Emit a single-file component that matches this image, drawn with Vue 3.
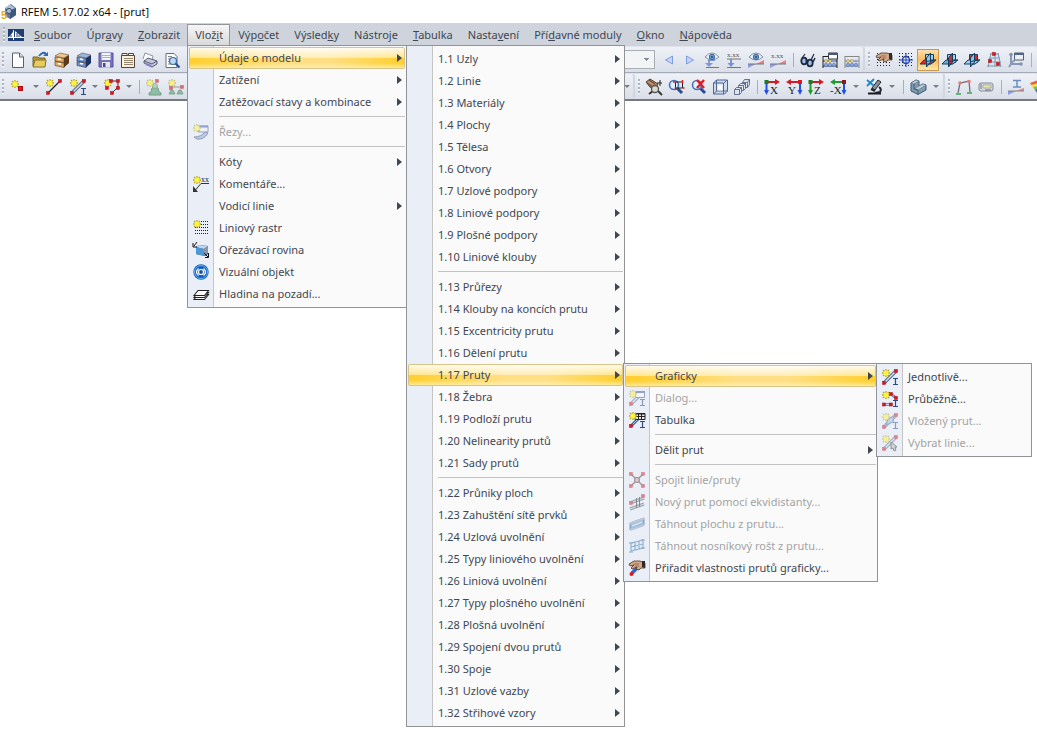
<script setup>
const star = (x, y) =>
  `<path d="M${x} ${y - 4}v8M${x - 4} ${y}h8M${x - 3} ${y - 3}l6 6M${x + 3} ${y - 3}l-6 6" stroke="#b5a51c" stroke-width="1.300"/><circle cx="${x}" cy="${y}" r="2.600" fill="#fff23a"/>`
const dot = (x, y) => `<rect x="${x - 1.5}" y="${y - 1.5}" width="3" height="3" fill="#e01420" stroke="#a80d16" stroke-width=".5"/>`
const beam = (x, y) => `<path d="M${x} ${y + 0.5}h5M${x} ${y + 6.5}h5M${x + 2.5} ${y + 0.5}v6" stroke="#2c4a86" stroke-width="1.2" fill="none"/>`
const rod = '<path d="M2 14L14 2" stroke="#5e6c80" stroke-width="3.500"/><path d="M2 14L14 2" stroke="#c4dcf5" stroke-width="1.500"/>'
const cabinet = (front, top, side) =>
  `<path d="M10 6l5-3v8l-5 4.500z" fill="${side}"/><path d="M1 4l5-3 9 2-5 3z" fill="${top}" stroke="#43382f" stroke-width=".5"/><path d="M1 5l9 1.500v4L1 9zM1 9.500l9 1.500v4.500L1 13.500z" fill="${front}" stroke="#43382f" stroke-width=".6"/><path d="M4 7l3 .5M4 11.500l3 .5" stroke="#fff" stroke-width="1.300"/>`
const eye = (y) =>
  `<path d="M1 ${y}q7-8 14 0q-7 6-14 0" fill="#eaf1fa" stroke="#8290a6"/><circle cx="8" cy="${y}" r="2.700" fill="#6b9bd2" stroke="#456a98"/><circle cx="8" cy="${y}" r="1" fill="#27466f"/>`
const note = (y) => `<text x="1" y="${y}" font-family="Liberation Serif, serif" font-size="7" fill="#555">x.xx</text>`
const ramp = '<path d="M0 16v-4h8z" fill="#8d9be8"/><path d="M8 12l8-4v4z" fill="#e78387"/><path d="M0 12h16" stroke="#777"/>'
const axis = (v, flip, txt) => {
  const h = txt === '-X' ? '#1f9b32' : '#d81924'
  return `<path d="${flip ? 'M14 12V3' : 'M2.500 12V3'}" stroke="${v}" stroke-width="2"/><path d="${flip ? 'M11.500 11h5L14 16z' : 'M0 11h5l-2.500 5z'}" fill="${v}"/><path d="${flip ? 'M13 3H4' : 'M3 3h9'}" stroke="${h}" stroke-width="2"/><path d="${flip ? 'M5 0L0 3l5 3z' : 'M11 0l5 3-5 3z'}" fill="${h}"/><rect x="${flip ? 12 : 0.5}" y="1" width="4" height="4" fill="${txt === '-X' ? '#8b1820' : txt === 'Y' ? '#d81924' : '#1e7b2a'}"/><text x="${txt === '-X' ? 0 : flip ? 2 : 6}" y="15" font-family="Liberation Serif, serif" font-size="11" fill="#222">${txt}</text>`
}
const planes = (a, b, c) =>
  `<g stroke="#14405f"><path d="M5.500 2.500h8v8h-8z" fill="${a}"/><path d="M0 12l4-4h12l-5 4z" fill="${b}"/><path d="M6.500 6l4-5v9l-4 5z" fill="${c}"/><path d="M6.500 9.500l9-1.500M6.500 12h4" fill="none"/></g>`
const lens = (x) =>
  `<path d="M${x + 3} 9l5 5" stroke="#274d9c" stroke-width="3"/><circle cx="${x}" cy="6" r="4.500" fill="#e3f1ff" stroke="#4a72bd" stroke-width="1.600"/>`
const abacus = (c) =>
  `<path d="M1 4v12M15 4v12M1 9h14M1 14h14" stroke="${c}"/><g fill="#86a5e4" stroke="#5671a8" stroke-width=".6"><circle cx="4" cy="13" r="1.800"/><circle cx="8" cy="13" r="1.800"/><circle cx="12" cy="13" r="1.800"/></g><g fill="#f3df8e" stroke="#8c814d" stroke-width=".6"><circle cx="4" cy="9" r="1.500"/><circle cx="8" cy="9" r="1.500"/></g><circle cx="12" cy="9" r="1.600" fill="#86a5e4"/>`
const dotRows = () => {
  let s = ''
  for (let y = 1; y < 16; y += 3) for (let x = 1; x < 16; x += 3) s += `<rect x="${x}" y="${y}" width="1" height="1"/>`
  return `<g fill="#222">${s}</g>`
}
const hand = '<path d="M0 4l5-3 6 0 5 2v5l-4 0-2 2-3-1 1-2-5 2-1-1 3-3-4 1z" fill="#d3a784" stroke="#4b3528" stroke-width=".8"/><path d="M13 1h3v7l-3-1z" fill="#2f2b2b"/><path d="M5 4h5M6 6h4" stroke="#70503c" stroke-width=".6"/>'

const icons = {
  app: '<path d="M5 4l6-4 5 4v7l-6 4-5-3z" fill="#5f789c"/><path d="M5 4l5-3.500L15 4l-5 2.500z" fill="#aebfd5"/><path d="M10 7l6-3v7l-6 4z" fill="#3f587d"/><circle cx="9" cy="7" r="2.600" fill="#a6bad3" stroke="#354b6c"/><text x="1" y="15" font-family="Liberation Sans, sans-serif" font-size="11" font-weight="bold" fill="#e5ae12">5</text>',
  logo: '<path d="M0 2h16v12H0z" fill="#1f3e73"/><path d="M1 10l4-5 1 5zM7 4l7 6H7z" fill="#fff"/><path d="M0 10.500h16M5.500 3v10" stroke="#fff"/><path d="M9 6v4M11 8v2M3 8v2" stroke="#1f3e73"/>',
  page: '<path d="M2.500 1h7l4 4v10.500h-11z" fill="#fdfdfe" stroke="#5d6066"/><path d="M9.500 1v4h4" fill="#d8dce3" stroke="#5d6066"/>',
  open: '<path d="M1 14V5h5l1 1h6v3" fill="#b59a3e" stroke="#756324"/><path d="M1 15l2-7h11l-1 7z" fill="#e6cb5d" stroke="#85702a"/><path d="M7 4q4-5 7-2" fill="none" stroke="#2e69b2" stroke-width="2"/><path d="M11 4h5V0z" fill="#2e69b2"/>',
  boxO: cabinet('#ecaa57', '#f2c488', '#5e3a18'),
  boxB: cabinet('#6a92d2', '#9ab7e4', '#1d3264'),
  save: '<path d="M1 1h14v14H1z" fill="#7671b8" stroke="#5652a0"/><path d="M3.500 1h9v7h-9z" fill="#f3f5fc"/><path d="M4 3.500h8M4 5.500h8" stroke="#a9afcf"/><path d="M4 10h8v5.500H4z" fill="#e3e5ef"/><path d="M5 11h2.500v4H5z" fill="#4d4a94"/>',
  list: '<path d="M1.500 3.500h13v12h-13z" fill="#f9f1dc" stroke="#57432f"/><path d="M2 1.500h5v2H2zM8.500 1.500h5v2h-5z" fill="#fff" stroke="#57432f"/><path d="M4 6.500h9M4 8.500h9M4 10.500h9M4 12.500h9" stroke="#95866f"/>',
  print: '<path d="M1 7L3 1l8 3-1 6" fill="#fff" stroke="#8d94a8"/><path d="M2 9l4-3 9 3v3l-5 3-8-4z" fill="#c4c8dc" stroke="#555b75"/><path d="M2 9l8 3 5-3" stroke="#555b75" fill="none"/><path d="M4 12l5 2" stroke="#8580c4" stroke-width="2"/>',
  preview: '<path d="M2 1.500h8l3 3v11H2z" fill="#fff" stroke="#666c76"/><path d="M4 4.500h4M4 7h3M4 9.500h2M4 12h3" stroke="#888"/><circle cx="9" cy="9" r="3.500" fill="#b8d8f4" stroke="#416ca0" stroke-width="1.200"/><path d="M11.500 11.500l4 4" stroke="#274d9c" stroke-width="2.200"/>',
  node: star(5, 5) + '<rect x="8.500" y="7.500" width="4" height="4" fill="#e31b25" stroke="#a60d14"/>',
  line: '<path d="M2 14L14 2" stroke="#222" stroke-width="1.200"/>' + star(4, 4) + dot(2, 14) + dot(14, 2),
  member: rod + star(4, 4) + beam(11, 9) + dot(2, 14) + dot(14, 2),
  poly: '<path d="M6 2h8v7M13 9l-5 5" fill="none" stroke="#333"/>' + star(4, 4) + dot(7, 2) + dot(14, 2) + dot(14, 9) + dot(8, 14) + dot(3, 9),
  support: '<path d="M6 9l3-2 3 2 1 4 2 1v2H3v-2l2-1z" fill="#5aa573" stroke="#2f7148"/><circle cx="9" cy="7" r="2.500" fill="#8ac79d" stroke="#2f7148" stroke-width=".6"/>' + star(4, 4) + dot(11, 2),
  supports: '<path d="M2 8h13" stroke="#666"/><g fill="#5aa573" stroke="#2f7148" stroke-width=".8"><path d="M1 15l2-4h2l2 4zM9 15l2-4h2l2 4z"/></g>' + star(4, 4) + dot(14, 8) + dot(3, 9),
  prev: '<path d="M11.500 4v8L4.500 8z" fill="#c3d5f8" stroke="#7f9cde"/>',
  next: '<path d="M4.500 4v8l7-4z" fill="#c3d5f8" stroke="#7f9cde"/>',
  eyeDown: '<path d="M2 15.500h13" stroke="#777"/><path d="M11 8H5v5" stroke="#7e9ad8" stroke-width="2" fill="none"/><path d="M1 11h8l-4 4z" fill="#7e9ad8"/>' + eye(5),
  valDown: note(5) + '<path d="M1 7h14M1 15.500h14" stroke="#777"/><path d="M5 7v5" stroke="#7791d4" stroke-width="2"/><path d="M1.500 11h7L5 15z" fill="#7791d4"/>',
  eyeRamp: ramp + eye(5),
  valRamp: note(6) + ramp,
  glasses: '<path d="M2 6l3-4M11 8l3-6" stroke="#1c2940" stroke-width="1.200"/><ellipse cx="4" cy="9" rx="2.700" ry="3.300" fill="#a4bde4" stroke="#1c2940" stroke-width="1.800"/><ellipse cx="10" cy="11" rx="2.700" ry="3.300" fill="#a4bde4" stroke="#1c2940" stroke-width="1.800"/><path d="M6 9q1-2 2 1M13 10l2-4" stroke="#1c2940" stroke-width="1.500" fill="none"/>',
  abacusWin: '<path d="M1 4.500h14" stroke="#222"/>' + abacus('#222') + '<path d="M6.500 1h9v6h-9z" fill="#fff" stroke="#333"/><path d="M6 2h10" stroke="#46587d" stroke-width="2"/>',
  abacus: '<path d="M1 4.500h14" stroke="#888"/>' + abacus('#888'),
  handGrid: dotRows() + hand,
  snap: dotRows() + '<circle cx="8" cy="8" r="3.500" fill="#e9effc" stroke="#2340b4" stroke-width="1.500"/><path d="M8 1v14M1 8h14" stroke="#2340b4"/>',
  planeA: planes('#9fd0ef', '#e0252f', '#8fc4e8'),
  planeB: planes('#9fd0ef', '#6cb0de', '#e0252f'),
  planeC: planes('#e0252f', '#9fd0ef', '#8fc4e8'),
  mesh: '<path d="M4 2l9-1 3 13H1z" fill="#d9e4ee"/><path d="M4 2h9M3 6h11M2 10h13M1 14h14M5 1L2 15M9 1v14M12 1l3 14" stroke="#8299b0" fill="none"/>' + dot(8, 2) + dot(4, 9) + dot(12, 12),
  network: '<path d="M6.500 1h9v7h-9z" fill="#eef2f8" stroke="#525d71"/><path d="M6 2h10" stroke="#4e6590" stroke-width="2"/><path d="M3 2v10h11M3 12l-2 3M3 11l4-3" stroke="#8a98b8" stroke-width="2" fill="none"/><circle cx="3" cy="2.500" r="1.800" fill="#8394ad"/><circle cx="13" cy="12" r="1.800" fill="#8394ad"/>',
  zoomHand: '<path d="M0 3l4-3 8 5-3 6-5-3z" fill="#b98c6d" stroke="#5a3b29"/><path d="M3 1l6 4M1 4l6 4" stroke="#5a3b29"/><path d="M11 11l5 5M7 12l-4 3" stroke="#333" stroke-width="1.800"/><circle cx="9" cy="10" r="3.500" fill="#d9d9d0" stroke="#555" stroke-width="1.300"/><path d="M14 1v6M11 4h5" stroke="#222"/>',
  zoomWin: lens(6) + '<path d="M7.500 3h7v6h-7z" fill="none" stroke="#222"/><path d="M5 3h3M14.500 1v3M14.500 9h2M7.500 8v3" stroke="#d8202b" stroke-width="1.500"/>',
  zoomOff: lens(7) + '<path d="M7 1l7 8M14 1L7 9" stroke="#df1d28" stroke-width="2.500"/>',
  cube: '<path d="M1.500 4l3-3h11v11l-3 3h-11z" fill="#cfdaec" stroke="#516694"/><path d="M1.500 4h10v11M12 4l3-3M4.500 1v11l-3 3M4.500 12h11" stroke="#516694" fill="none"/><path d="M5.500 5.500h5v6h-5z" fill="#f5f8fd"/>',
  cubes: '<g fill="#dde4f0" stroke="#566886" stroke-width=".9"><path d="M8.500 3.500l2-3h5v5l-2 3h-5z"/><path d="M8.500 3.500h5v5M13.500 3.500l2-3"/><path d="M4.500 6.500l2-2h5v5l-2 2h-5z"/><path d="M4.500 6.500h5v5M9.500 6.500l2-2"/><path d="M.5 10.500l2-2h5v5l-2 2h-5z"/><path d="M.5 10.500h5v5M5.500 10.500l2-2"/></g>',
  axX: axis('#2450df', false, 'X'),
  axY: axis('#2450df', true, 'Y'),
  axZ: axis('#1f9b32', false, 'Z'),
  axNX: axis('#2450df', true, '-X'),
  scope: '<path d="M12 1l3 2-6 8-3-2z" fill="#8d9498" stroke="#22262b"/><path d="M2 14.500h13" stroke="#16191d" stroke-width="2"/><path d="M5 10l4 2M9 14l5-1q2-3-1-5" stroke="#22262b" stroke-width="2" fill="none"/><path d="M1 1l7 6M8 0L1 7" stroke="#1688d2" stroke-width="1.800"/>',
  solid: '<path d="M1 4l5-3 3 1v5l4-2 3 1v5l-8 4.500L1 12z" fill="#7f9bb0" stroke="#435b6e"/><path d="M1 4l3 1 5-3-3-1zM5 10l4-3 4-2 3 1-8 5z" fill="#c0d1dd" stroke="#5b7386" stroke-width=".6"/><path d="M4 5v5l4 1v4" stroke="#435b6e" fill="none"/>',
  frame: '<path d="M2 14L4 4l9-2 1 11" fill="none" stroke="#697482" stroke-width="1.300"/><g fill="#e67b7b"><circle cx="4" cy="4" r="1.800"/><circle cx="13" cy="2.500" r="1.800"/></g><path d="M0 15h5M11 14h5" stroke="#65b477" stroke-width="2"/>',
  tape: '<rect x="1" y="4" width="14" height="8" rx="2" fill="#d5d8de" stroke="#888e97"/><path d="M5 6h8v3H5z" fill="#eae79f" stroke="#8f9499" stroke-width=".6"/><path d="M3 5v5" stroke="#777d86"/><path d="M7 11h6" stroke="#687181"/>',
  beamRamp: '<path d="M5 1.500h8M5 8h8M9 1.500V8" stroke="#6d8dc4" stroke-width="1.500"/><path d="M0 16v-4h8z" fill="#8d9be8"/><path d="M8 12l8-3v3z" fill="#e78387"/><path d="M0 12h16" stroke="#888"/>',
  rainbow: '<path d="M0 4l8-3 8 4-8 10z" fill="#f05b39"/><path d="M1 6l8-2 5 4-6 7z" fill="#ffe24e"/><path d="M3 8l6-1 2 3-3 5z" fill="#5ec75f"/><path d="M5 11l3-1 1 2-1 3z" fill="#3b6bd5"/>',
  knife: '<path d="M5.500 2h9.500v6H5.500z" fill="#eef2fb" stroke="#4e5a75"/><path d="M5 2.500h10" stroke="#3d56a8" stroke-width="2"/><path d="M1 13q7 0 11-5l3 1q-4 7-11 6z" fill="#8fa9d3" stroke="#344d7d"/>' + star(4, 4),
  comment: '<text x="8" y="6" font-family="Liberation Serif, serif" font-size="8" fill="#222">xx</text><path d="M16 7.500H8l-6 7" stroke="#333" fill="none"/><path d="M0 10v6h5z" fill="#333"/>' + star(4, 4),
  raster: '<path d="M8 1.500h8M8 4.500h8M2 7.500h14M2 10.500h14M2 13.500h14" stroke="#222" stroke-dasharray="1 1"/>' + star(4, 4),
  clip: '<path d="M3 5l3-2 9 1v8l-3 2-9-2z" fill="#24323f"/><path d="M3 5l8 2v7l-8-2z" fill="#4c96da"/><path d="M3 5l3-2 9 1-4 3z" fill="#b9d9f3"/><path d="M11 7l4-3v7l-4 3z" fill="#8797a7"/><path d="M4 0L1 4M0 1v4h4M11 11l4 4M15.500 11v4.500H12" stroke="#111" fill="none"/>',
  visual: '<circle cx="8" cy="8" r="7.700" fill="#1560bd"/><circle cx="8" cy="8" r="6.500" fill="none" stroke="#6fb2f2"/><path d="M5.500 4.500q-4 3.500 0 7M10.500 4.500q4 3.500 0 7" fill="none" stroke="#fff" stroke-width="1.300"/><circle cx="8" cy="8" r="2.500" fill="#1c4f9e" stroke="#fff" stroke-width="1.200"/>',
  layers: '<g fill="#fff" stroke="#222" stroke-width="1.100"><path d="M1 13.500l4-5h10.500l-4 5z"/><path d="M1 11.500l4-5h10.500l-4 5z"/><path d="M1 9.500l4-5h10.500l-4 5z"/></g>',
  dialog: rod + '<path d="M6.500 1.500h9v6h-9z" fill="#fff" stroke="#4e5a75"/><path d="M6 2h10" stroke="#3d56a8" stroke-width="2"/>' + star(4, 4) + beam(11, 9) + dot(2, 14),
  table: '<path d="M2 14l8-8" stroke="#44628f" stroke-width="3"/><path d="M2 14l8-8" stroke="#a9c8ea"/><path d="M6 1.500h10v6H6z" fill="#e8e8e8" stroke="#222"/><path d="M6 2h10M6 4.500h10M9.500 1v6M12.500 1v6" stroke="#222"/>' + star(4, 4) + beam(11, 9) + dot(2, 14),
  join: '<path d="M2 2l12 12M14 2L2 14" stroke="#333" stroke-width="1.200"/><circle cx="8" cy="8" r="2.500" fill="#e8999a" stroke="#333"/>' + dot(2, 2) + dot(14, 2) + dot(2, 14) + dot(14, 14),
  offset: '<path d="M1 9l14-5M1 15l14-5" stroke="#4c5664" stroke-width="3"/><path d="M1 9l14-5M1 15l14-5" stroke="#c8d3e2"/><path d="M7.500 4v10M10.500 3v10" stroke="#222"/>' + dot(14, 2) + dot(2, 9),
  extrude: '<path d="M1 7l14-5v7L1 14z" fill="#4f8dc0" stroke="#3b4d5f"/><path d="M1 7.500l14-5M1 14l14-5" stroke="#8ea4b8" stroke-width="2"/><path d="M3 10l10-4" stroke="#bcdaf0" stroke-width="1.500"/>',
  grate: '<path d="M2 5l12-3v8L2 13zM2 9l12-3M6 4v8M10 3v8" fill="#e3effa" stroke="#3f79ae" stroke-width="1.200"/><path d="M0 5h4M0 14h4M12 2h4M12 10h4" stroke="#385f89"/>',
  assign: '<path d="M3 13l5-5" stroke="#2f66d8" stroke-width="3.500"/>' + hand + '<circle cx="2.500" cy="14" r="2" fill="#df1721"/>',
  single: rod + star(4, 4) + beam(11, 9) + dot(2, 14) + dot(14, 2),
  chain: '<path d="M2 13.500h8M9 3l5 4" stroke="#5e6c80" stroke-width="2.500"/><path d="M2 13.500h8M9 3l5 4" stroke="#c4dcf5"/>' + star(4, 4) + beam(11, 9) + dot(9, 3) + dot(14, 7) + dot(2, 13.5) + dot(9, 13.5),
  inserted: rod + '<path d="M4 12l2-6 6-3-1 6z" fill="#94bdee" stroke="#45658f"/>' + star(4, 4) + beam(11, 9) + dot(2, 14) + dot(14, 2),
  pick: rod + star(4, 4) + '<path d="M9 7v7l2-1 1 3 2-1-1-3h2z" fill="#bbb" stroke="#333"/>' + dot(2, 14) + dot(14, 2),
}

const menuBar = ['&Soubor', 'Úpr&avy', '&Zobrazit', 'Vlož&it', 'Výp&očet', 'Výsled&ky', 'Nástro&je', '&Tabulka', 'Nasta&vení', 'Pří&davné moduly', '&Okno', '&Nápověda'].map((s) => {
  const i = s.indexOf('&')
  return { pre: s.slice(0, i), key: s[i + 1], post: s.slice(i + 2), text: s.replace('&', '') }
})

const b = (icon, extra = '') => ({ kind: 'button', icon, extra })
const caret = (extra = '') => ({ kind: 'caret', extra })
const sep = { kind: 'sep' }
const row1 = [
  { cls: 'first-top', items: [...['page', 'open', 'boxO', 'boxB', 'save', 'list', 'print', 'preview'].map((n) => b(n)), { kind: 'select' }, b('prev', 'narrow'), b('next'), ...['eyeDown', 'valDown', 'eyeRamp', 'valRamp'].map((n) => b(n)), sep, b('glasses'), b('abacusWin'), b('abacus')] },
  { cls: 'rest', items: [b('handGrid'), b('snap'), b('planeA', 'on'), b('planeB'), b('planeC'), b('mesh'), b('network'), sep] },
]
const row2 = [
  { cls: 'first', items: [b('node'), caret('wide'), b('line', 'spaced'), b('member'), caret(), b('poly'), caret(), sep, b('support', 'dim'), b('supports', 'dim'), caret('last')] },
  { cls: 'middle', items: [...['zoomHand', 'zoomWin', 'zoomOff', 'cube', 'cubes'].map((n) => b(n)), sep, b('axX'), b('axY'), b('axZ'), b('axNX'), caret('wide'), b('scope'), caret('wide'), sep, b('solid'), caret('wide')] },
  { cls: 'rest', items: [b('frame'), b('tape'), sep, b('beamRamp'), b('rainbow')] },
]

const item = (text, icon = '', sub = false, off = false, on = false) => ({ text, icon, sub, off, on })
const subs = (list) => list.map((t) => item(t, '', true, false, t === '1.17 Pruty'))
const menus = [
  { cls: 'insert', label: 'Vložit', items: [item('Údaje o modelu', '', true, false, true), item('Zatížení', '', true), item('Zatěžovací stavy a kombinace', '', true), null, item('Řezy...', 'knife', false, true), null, item('Kóty', '', true), item('Komentáře...', 'comment'), item('Vodicí linie', '', true), item('Liniový rastr', 'raster'), item('Ořezávací rovina', 'clip'), item('Vizuální objekt', 'visual'), item('Hladina na pozadí...', 'layers')] },
  { cls: 'model', label: 'Údaje o modelu', items: [...subs(['1.1 Uzly', '1.2 Linie', '1.3 Materiály', '1.4 Plochy', '1.5 Tělesa', '1.6 Otvory', '1.7 Uzlové podpory', '1.8 Liniové podpory', '1.9 Plošné podpory', '1.10 Liniové klouby']), null, ...subs(['1.13 Průřezy', '1.14 Klouby na koncích prutu', '1.15 Excentricity prutu', '1.16 Dělení prutu', '1.17 Pruty', '1.18 Žebra', '1.19 Podloží prutu', '1.20 Nelinearity prutů', '1.21 Sady prutů']), null, ...subs(['1.22 Průniky ploch', '1.23 Zahuštění sítě prvků', '1.24 Uzlová uvolnění', '1.25 Typy liniového uvolnění', '1.26 Liniová uvolnění', '1.27 Typy plošného uvolnění', '1.28 Plošná uvolnění', '1.29 Spojení dvou prutů', '1.30 Spoje', '1.31 Uzlové vazby', '1.32 Střihové vzory'])] },
  { cls: 'members', label: '1.17 Pruty', items: [item('Graficky', '', true, false, true), item('Dialog...', 'dialog', false, true), item('Tabulka', 'table'), null, item('Dělit prut', '', true), null, item('Spojit linie/pruty', 'join', false, true), item('Nový prut pomocí ekvidistanty...', 'offset', false, true), item('Táhnout plochu z prutu...', 'extrude', false, true), item('Táhnout nosníkový rošt z prutu...', 'grate', false, true), item('Přiřadit vlastnosti prutů graficky...', 'assign')] },
  { cls: 'graphic', label: 'Graficky', items: [item('Jednotlivě...', 'single'), item('Průběžně...', 'chain'), item('Vložený prut...', 'inserted', false, true), item('Vybrat linie...', 'pick', false, true)] },
]
</script>

<template>
  <div class="window">
    <header class="title">
      <svg class="icon" viewBox="0 0 16 16" v-html="icons.app"></svg>
      <span>RFEM 5.17.02 x64 - [prut]</span>
    </header>

    <nav class="menubar">
      <i class="grip"></i>
      <svg class="icon logo" viewBox="0 0 16 16" v-html="icons.logo"></svg>
      <button v-for="m in menuBar" :key="m.text" type="button" :class="{ open: m.text === 'Vložit' }">{{ m.pre }}<u>{{ m.key }}</u>{{ m.post }}</button>
    </nav>

    <div v-for="(row, r) in [row1, row2]" :key="r" class="toolrow">
      <div v-for="(bar, n) in row" :key="n" class="toolbar" :class="bar.cls" role="toolbar">
        <i class="grip"></i>
        <template v-for="(t, k) in bar.items" :key="k">
          <i v-if="t.kind === 'sep'" class="vsep"></i>
          <select v-else-if="t.kind === 'select'" class="combo" aria-label="Zatěžovací stav"></select>
          <button v-else-if="t.kind === 'caret'" type="button" class="caret" :class="t.extra" aria-label="Další"></button>
          <button v-else type="button" class="tool" :class="t.extra" :aria-label="t.icon">
            <svg class="icon" viewBox="0 0 16 16" v-html="icons[t.icon]"></svg>
          </button>
        </template>
      </div>
    </div>

    <ul v-for="m in menus" :key="m.cls" class="menu" :class="m.cls" role="menu" :aria-label="m.label">
      <template v-for="(it, k) in m.items" :key="k">
        <li v-if="!it" class="hsep" role="separator"></li>
        <li v-else role="none">
          <button type="button" role="menuitem" class="entry" :class="{ on: it.on }" :disabled="it.off">
            <span class="slot"><svg v-if="it.icon" class="icon" viewBox="0 0 16 16" v-html="icons[it.icon]"></svg></span>
            <span class="text">{{ it.text }}</span>
            <i v-if="it.sub" class="arrow"></i>
          </button>
        </li>
      </template>
    </ul>
  </div>
</template>

<style>
body {
  margin: 0;
  background: #fff;
  overflow: hidden;
}
</style>

<style scoped>
.window {
  position: relative;
  min-height: 100vh;
  font: 11px/20px "Noto Sans", sans-serif;
  color: #3f4752;
}
button {
  margin: 0;
  padding: 0;
  border: 0;
  background: none;
  font: inherit;
  color: inherit;
}
.icon {
  display: block;
  flex: none;
  width: 16px;
  height: 16px;
  overflow: visible;
}
.title {
  display: flex;
  align-items: center;
  gap: 5px;
  height: 23px;
  font: 11px/23px "Open Sans", sans-serif;
  color: #000;
}
.menubar {
  display: flex;
  align-items: center;
  height: 23px;
  background: #ced3dc;
}
.grip {
  flex: none;
  width: 2px;
  height: 16px;
  margin: 0 3px;
  background: repeating-linear-gradient(#aeb4bf 0 2px, #fbfcfd 2px 3px, transparent 3px 4px);
}
.logo {
  margin-right: 2px;
}
.menubar button {
  height: 21px;
  padding: 0 6px 0 7px;
  border: 1px solid transparent;
  border-bottom: 0;
  white-space: nowrap;
}
.menubar .open {
  background: linear-gradient(#f6f6f6, #d9d9d9);
  border-color: #92959b;
}
.toolrow {
  display: flex;
  height: 25px;
  overflow: hidden;
  padding-top: 1px;
  background: #dfe3eb;
  border-bottom: 1px solid #a5abb6;
}
.toolrow + .toolrow {
  border-bottom: 2px solid #77797e;
}
.toolbar {
  flex: none;
  display: flex;
  align-items: center;
  box-sizing: border-box;
  background: linear-gradient(#eef1f7, #d9dee8);
  border-right: 2px solid #d2d6df;
  border-radius: 0 3px 3px 0;
}
.toolbar.rest {
  flex: 1 1 0;
  min-width: 0;
  border-right: 0;
}
.toolbar.first {
  width: 635px;
}
.toolbar.first-top {
  width: 865px;
}
.toolbar:first-child .grip {
  margin: 0 3px 0 2px;
}
.tool {
  flex: none;
  display: grid;
  place-items: center;
  box-sizing: border-box;
  width: 22px;
  height: 22px;
}
.tool.narrow {
  width: 20px;
}
.tool.spaced {
  margin-right: 2px;
}
.tool.dim {
  opacity: 0.6;
}
.tool.on {
  background: linear-gradient(#fde0ae, #fbb95e 50%, #fde9a8);
  border: 1px solid #c7984e;
}
.caret {
  flex: none;
  width: 12px;
  height: 22px;
  display: grid;
  place-items: center;
}
.caret.wide {
  width: 14px;
}
.caret.last {
  margin-left: auto;
}
.caret::before {
  content: "";
  border: 3px solid transparent;
  border-top-color: #777d87;
  border-bottom: 0;
}
.vsep {
  flex: none;
  width: 1px;
  height: 14px;
  margin: 0 3px 0 4px;
  background: #a9afba;
}
.combo {
  appearance: none;
  box-sizing: border-box;
  width: 194px;
  height: 19px;
  margin: 0 4px 0 auto;
  border: 1px solid #a9adb4;
  border-radius: 0;
  background: linear-gradient(#858b94, #858b94) right 5px top 7px / 5px 1px no-repeat, linear-gradient(#858b94, #858b94) right 6px top 8px / 3px 1px no-repeat, linear-gradient(#858b94, #858b94) right 7px top 9px / 1px 1px no-repeat, #f3f4f6;
}
.menu {
  position: absolute;
  box-sizing: border-box;
  margin: 0;
  padding: 1px 1px 2px;
  list-style: none;
  border: 1px solid #919397;
  background: linear-gradient(#e9eef7, #e9eef7) 0 0 / 25px 100% no-repeat, linear-gradient(#c5c5c5, #c5c5c5) 25px 0 / 1px 100% no-repeat, #fafafa;
}
.insert {
  left: 187px;
  top: 45px;
  width: 220px;
}
.model {
  left: 406px;
  top: 45px;
  width: 219px;
  padding-top: 2px;
}
.members {
  left: 623px;
  top: 363px;
  width: 255px;
}
.graphic {
  left: 876px;
  top: 363px;
  width: 156px;
  padding-top: 2px;
}
.entry {
  display: flex;
  align-items: center;
  box-sizing: border-box;
  width: 100%;
  height: 22px;
  border: 1px solid transparent;
  border-radius: 2px;
  text-align: left;
}
.slot {
  flex: none;
  width: 29px;
  padding-left: 3px;
  box-sizing: border-box;
}
.text {
  flex: 1;
  white-space: nowrap;
}
.entry:disabled {
  color: #a3a3a3;
}
.entry:disabled .icon {
  opacity: 0.5;
}
.entry.on {
  border-color: #d8c389;
  background: linear-gradient(rgba(255, 255, 255, 0.9), rgba(255, 250, 225, 0.55) 48%, transparent 50%, transparent 75%, rgba(255, 245, 190, 0.7)), linear-gradient(90deg, #ffcf2e, #ffdf85 45%, #ffdf85 65%, #ffcf2e);
}
.arrow {
  margin-right: 2px;
  border: 4px solid transparent;
  border-left: 5px solid #3f4752;
  border-right: 0;
}
.hsep {
  height: 8px;
  padding: 3px 0 4px 30px;
  box-sizing: border-box;
}
.hsep::before {
  content: "";
  display: block;
  height: 1px;
  background: #c2c2c2;
}
</style>
